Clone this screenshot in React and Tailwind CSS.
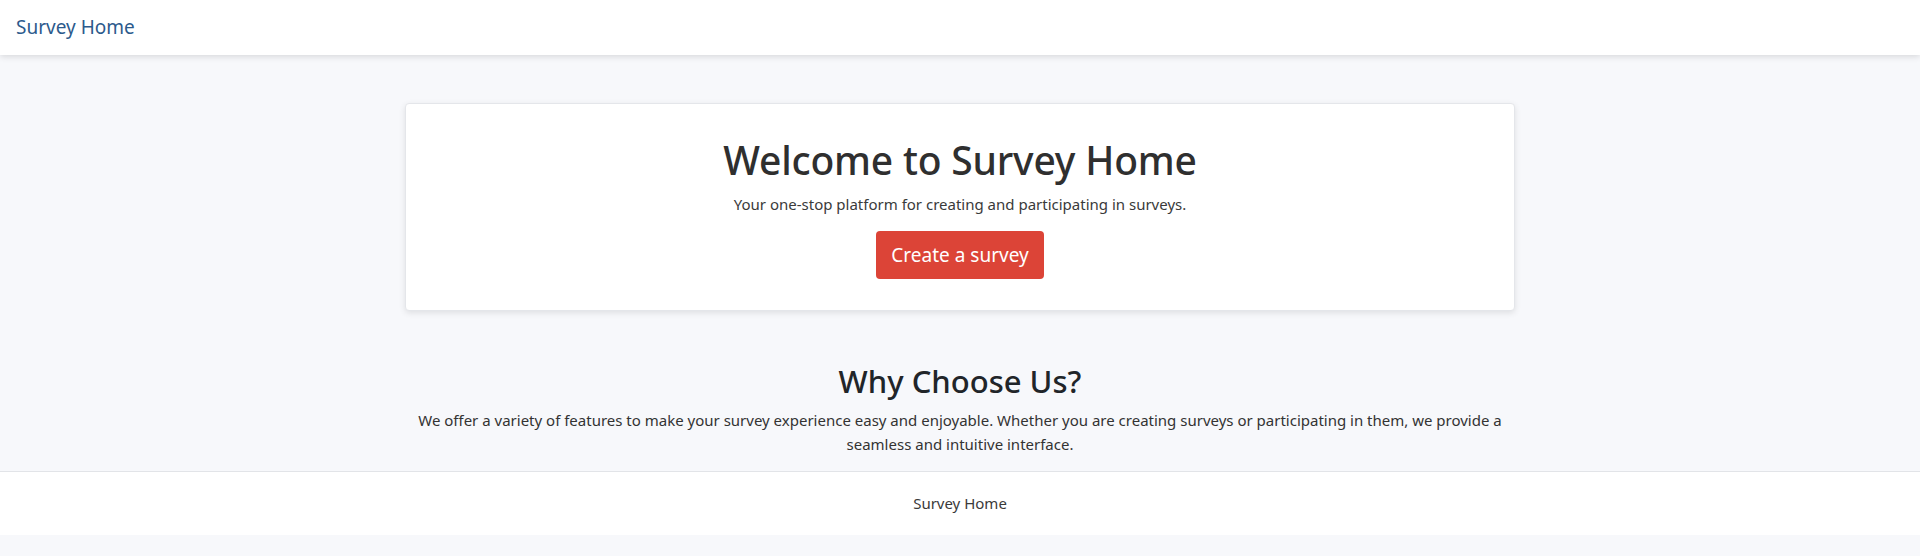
import React from "react";

export default function App() {
  return (
    <div
      className="min-h-screen bg-[#f7f8fb] text-[#333333]"
      style={{ fontFamily: '"Noto Sans", "Open Sans", Arial, sans-serif' }}
    >
      <nav className="h-[55px] bg-white shadow-[0_2px_6px_rgba(0,0,0,0.12)] flex items-center px-4 relative z-10">
        <a className="text-[19px] leading-none text-[#2c5a8c]">Survey Home</a>
      </nav>

      <main className="w-[1110px] mx-auto">
        <section className="mt-[48px] bg-white border border-[#e4e6ea] rounded-[4px] shadow-[0_2px_6px_rgba(0,0,0,0.10)] pt-[32px] pb-[31px] flex flex-col items-center">
          <h1 className="text-[39px] leading-[48px] font-medium text-[#2f2f2f] tracking-[-0.2px]">
            Welcome to Survey Home
          </h1>
          <p className="mt-[8px] text-[15px] leading-[24px] text-[#3a3a3a]">
            Your one-stop platform for creating and participating in surveys.
          </p>
          <button className="mt-[15px] h-[48px] px-[15px] rounded-[4px] bg-[#dc4437] text-white text-[19px] leading-none">
            Create a survey
          </button>
        </section>

        <section className="mt-[51px] text-center">
          <h2 className="text-[31px] leading-[38px] font-medium text-[#212529]">
            Why Choose Us?
          </h2>
          <p className="mt-[8px] mx-auto text-[15px] leading-[24px] text-[#333333] max-w-[1090px]">
            We offer a variety of features to make your survey experience easy and enjoyable. Whether you are creating surveys or participating in them, we provide a
            <br />
            seamless and intuitive interface.
          </p>
        </section>
      </main>

      <footer className="mt-[15px] bg-white border-t border-[#e2e4e8] h-[64px] flex items-center justify-center">
        <span className="text-[15px] text-[#3a3a3a]">Survey Home</span>
      </footer>
    </div>
  );
}
